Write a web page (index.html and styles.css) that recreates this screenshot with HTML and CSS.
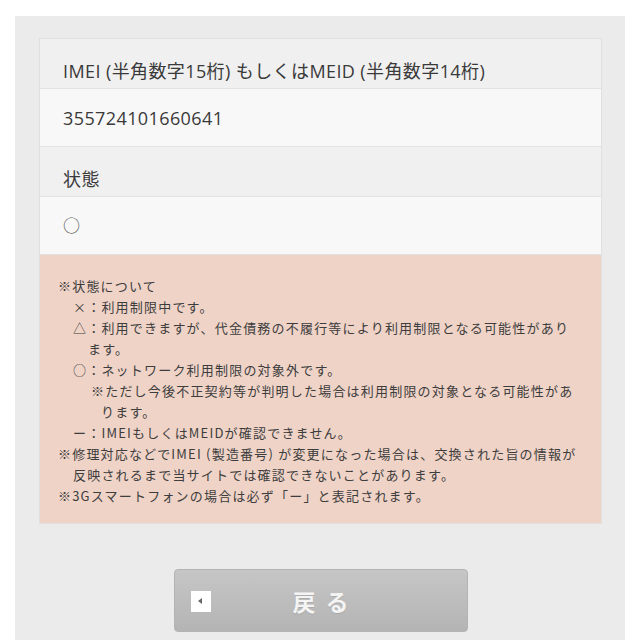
FILE: index.html
```html
<!DOCTYPE html>
<html lang="ja">
<head>
    <meta charset="UTF-8">
    <meta name="viewport" content="width=device-width, initial-scale=1.0">
    <title>ネットワーク利用制限確認</title>
    <link rel="stylesheet" href="styles.css">
</head>
<body>
    <div class="page">
        <div class="result-table">
            <div class="row-label">IMEI (半角数字15桁) もしくはMEID (半角数字14桁)</div>
            <div class="row-value">355724101660641</div>
            <div class="row-label">状態</div>
            <div class="row-value status">○</div>

            <div class="notes">
                <p>※状態について</p>
                <p class="item">×：利用制限中です。</p>
                <p class="item">△：利用できますが、代金債務の不履行等により利用制限となる可能性があり<br><span class="cont">ます。</span></p>
                <p class="item">○：ネットワーク利用制限の対象外です。</p>
                <p class="sub">※ただし今後不正契約等が判明した場合は利用制限の対象となる可能性があ<br><span class="cont">ります。</span></p>
                <p class="item">ー：IMEIもしくはMEIDが確認できません。</p>
                <p>※修理対応などでIMEI (製造番号) が変更になった場合は、交換された旨の情報が<br><span class="cont">反映されるまで当サイトでは確認できないことがあります。</span></p>
                <p>※3Gスマートフォンの場合は必ず「ー」と表記されます。</p>
            </div>
        </div>

        <div class="actions">
            <button class="back-btn">
                <span class="back-icon"></span>
                <span class="back-text">戻る</span>
            </button>
        </div>
    </div>
</body>
</html>
```

FILE: styles.css
```css
* {
    margin: 0;
    padding: 0;
    box-sizing: border-box;
}

body {
    font-family: 'Noto Sans CJK JP', 'Noto Sans', sans-serif;
    background: #ffffff;
    color: #333333;
}

.page {
    margin: 16px 15px 0;
    padding: 22px 23px 20px 24px;
    background: #ebebeb;
    min-height: 624px;
}

.result-table {
    border: 1px solid #e0e0e0;
    background: #e3e3e3;
}

.row-label,
.row-value {
    font-family: 'Open Sans', 'Noto Sans CJK JP', sans-serif;
    font-size: 18px;
    letter-spacing: 0.4px;
    color: #3a3a3a;
    border-bottom: 1px solid #e2e2e2;
}

.row-label {
    height: 50px;
    padding: 19px 23px 0;
    background: #f0f0f0;
    line-height: 26px;
}

.row-value {
    height: 58px;
    padding: 0 23px;
    background: #f8f8f8;
    line-height: 58px;
}

.status {
    color: #555555;
    font-size: 17px;
}

.notes {
    background: #efd3c7;
    padding: 20px 0 17px 18px;
    font-size: 13px;
    line-height: 21px;
    letter-spacing: 1.2px;
    color: #3d3d3d;
    white-space: nowrap;
}

.notes .item {
    padding-left: 15px;
}

.notes .sub {
    padding-left: 33px;
}

.notes .cont {
    padding-left: 15px;
}

.notes .sub .cont {
    padding-left: 10px;
}

.actions {
    display: flex;
    justify-content: center;
    margin-top: 45px;
}

.back-btn {
    position: relative;
    width: 294px;
    height: 63px;
    border: 1px solid #b3b3b3;
    border-radius: 4px;
    background: linear-gradient(#c6c6c6, #b4b4b4);
    display: flex;
    align-items: center;
    justify-content: center;
    font-family: inherit;
    cursor: pointer;
}

.back-icon {
    position: absolute;
    left: 16px;
    top: 21px;
    width: 20px;
    height: 21px;
    background: #ffffff;
}

.back-icon::after {
    content: '';
    position: absolute;
    left: 7px;
    top: 7px;
    border-top: 3px solid transparent;
    border-bottom: 3px solid transparent;
    border-right: 4px solid #666666;
}

.back-text {
    font-size: 23px;
    font-weight: bold;
    letter-spacing: 10px;
    margin-right: -10px;
    color: #f4f4f4;
    text-shadow: 0 1px 1px rgba(0, 0, 0, 0.1);
}
```
